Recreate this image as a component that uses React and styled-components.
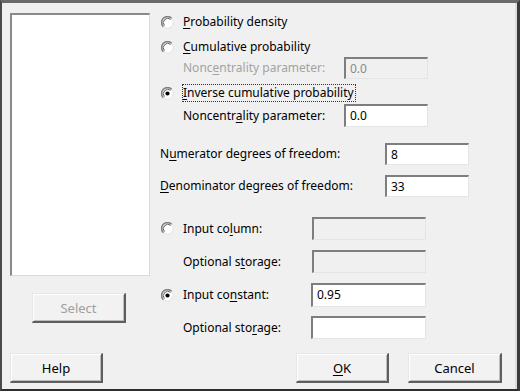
import React from 'react'
import styled, { createGlobalStyle } from 'styled-components'

const GlobalStyle = createGlobalStyle`
  html, body {
    margin: 0;
    padding: 0;
    background: #f0f0f0;
  }
  * {
    box-sizing: border-box;
  }
`;

const Radio = ({ checked }) => (
  <RadioBox>
    <svg width="13" height="13" viewBox="0 0 13 13">
      <circle cx="6.5" cy="6.5" r="5.6" fill="#fff" stroke="#e2e2e2" strokeWidth="1" />
      <path d="M2.3 10.7 A5.9 5.9 0 0 1 10.7 2.3" fill="none" stroke="#808080" strokeWidth="1.6" />
      <path d="M3.4 9.6 A4.4 4.4 0 0 1 9.6 3.4" fill="none" stroke="#4a4a4a" strokeWidth="0.9" />
      {checked && <circle cx="6.5" cy="6.5" r="2.1" fill="#000" />}
    </svg>
  </RadioBox>
)

const Mn = ({ children }) => <U>{children}</U>

const App = () => {
  return (
    <>
      <GlobalStyle />
      <Window>
        <Main>
          <LeftCol>
            <ListBox />
            <Button $disabled $w={94} $ml={22}>Select</Button>
          </LeftCol>
          <RightCol>
            <Row $mt={9} $h={20}>
              <Radio />
              <Label><Mn>P</Mn>robability density</Label>
            </Row>
            <Row $mt={5} $h={20}>
              <Radio />
              <Label><Mn>C</Mn>umulative probability</Label>
            </Row>
            <Row $mt={0} $h={22} $indent>
              <Label $w={161} $disabled>Nonc<Mn>e</Mn>ntrality parameter:</Label>
              <Input $w={84} $disabled>0.0</Input>
            </Row>
            <Row $mt={4} $h={20}>
              <Radio checked />
              <Label $focus><Mn>I</Mn>nverse cumulative probability</Label>
            </Row>
            <Row $mt={1} $h={23} $indent>
              <Label $w={161}>Noncentr<Mn>a</Mn>lity parameter:</Label>
              <Input $w={84}>0.0</Input>
            </Row>
            <Row $mt={16} $h={22}>
              <Label $w={225}>N<Mn>u</Mn>merator degrees of freedom:</Label>
              <Input $w={84}>8</Input>
            </Row>
            <Row $mt={10} $h={22}>
              <Label $w={225}><Mn>D</Mn>enominator degrees of freedom:</Label>
              <Input $w={84}>33</Input>
            </Row>
            <Row $mt={20} $h={23}>
              <Radio />
              <Label $w={129}>Input co<Mn>l</Mn>umn:</Label>
              <Input $w={114} $disabled />
            </Row>
            <Row $mt={10} $h={23} $indent>
              <Label $w={129}>Optional s<Mn>t</Mn>orage:</Label>
              <Input $w={114} $disabled />
            </Row>
            <Row $mt={10} $h={24}>
              <Radio checked />
              <Label $w={128}>Input co<Mn>n</Mn>stant:</Label>
              <Input $w={115}>0.95</Input>
            </Row>
            <Row $mt={9} $h={23} $indent>
              <Label $w={128}>Optional sto<Mn>r</Mn>age:</Label>
              <Input $w={115} />
            </Row>
          </RightCol>
        </Main>
        <Footer>
          <Button $w={93}>Help</Button>
          <Spacer />
          <Button $w={93}><Mn>O</Mn>K</Button>
          <Button $w={94} $ml={19}>Cancel</Button>
        </Footer>
      </Window>
    </>
  )
}

const Window = styled.div`
width: 520px;
height: 391px;
background: #f0f0f0;
border-top: 3px solid #6a6a6a;
border-left: 2px solid #4a4a4a;
border-right: 3px solid #3a3a3a;
border-bottom: 2px solid #2e2e2e;
box-shadow: inset -2px 0 0 #dcdcdc;
display: flex;
flex-direction: column;
font-family: "Noto Sans", "DejaVu Sans", sans-serif;
font-size: 12px;
color: #000;
`;

const Main = styled.div`
display: flex;
padding-left: 8px;
`;

const LeftCol = styled.div`
width: 150px;
display: flex;
flex-direction: column;
padding-top: 10px;
`;

const ListBox = styled.div`
width: 140px;
height: 263px;
background: #fff;
border-top: 2px solid #8a8a8a;
border-left: 2px solid #8a8a8a;
border-right: 1px solid #dadada;
border-bottom: 1px solid #dadada;
margin-bottom: 17px;
`;

const RightCol = styled.div`
display: flex;
flex-direction: column;
`;

const Row = styled.div`
display: flex;
align-items: center;
height: ${p => p.$h}px;
margin-top: ${p => p.$mt}px;
padding-left: ${p => (p.$indent ? 23 : 0)}px;
white-space: nowrap;
`;

const RadioBox = styled.span`
display: inline-flex;
width: 13px;
height: 13px;
margin-left: 1px;
margin-right: 9px;
`;

const Label = styled.span`
display: inline-block;
width: ${p => (p.$w ? `${p.$w}px` : 'auto')};
color: ${p => (p.$disabled ? '#a3a3a3' : '#000')};
line-height: 16px;
${p => p.$focus && `
  outline: 1px dotted #333;
  outline-offset: 0;
  padding-right: 1px;
`}
`;

const U = styled.span`
text-decoration: underline;
text-underline-offset: 2px;
`;

const Input = styled.div`
width: ${p => p.$w}px;
height: 100%;
background: ${p => (p.$disabled ? '#f0f0f0' : '#fff')};
color: ${p => (p.$disabled ? '#8a8a8a' : '#000')};
border-top: 2px solid #7e7e7e;
border-left: 2px solid #7e7e7e;
border-right: 1px solid #e4e4e4;
border-bottom: 1px solid #e4e4e4;
padding: 2px 0 0 4px;
line-height: 16px;
`;

const Footer = styled.div`
display: flex;
padding: 0 15px 0 8px;
margin-top: 14px;
`;

const Spacer = styled.div`
flex: 1;
`;

const Button = styled.div`
width: ${p => p.$w}px;
height: 30px;
margin-left: ${p => p.$ml || 0}px;
display: flex;
align-items: center;
justify-content: center;
background: #f2f2f2;
color: ${p => (p.$disabled ? '#a0a0a0' : '#000')};
border-top: 1px solid #e6e6e6;
border-left: 1px solid #e6e6e6;
border-right: 2px solid #5e5e5e;
border-bottom: 2px solid #5e5e5e;
box-shadow: inset 1px 1px 0 #fff, inset -1px -1px 0 #bdbdbd;
font-size: 13px;
`;

export default App
